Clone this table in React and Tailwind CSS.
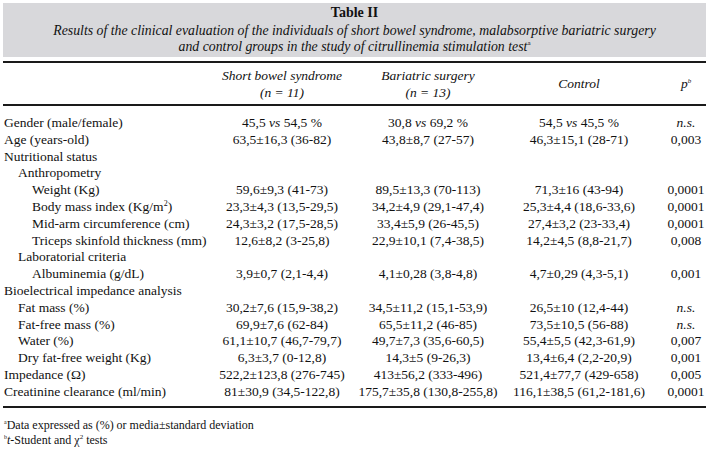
import React from "react";

const rows = [
  { l: "Gender (male/female)", lv: 0, v: [["45,5 ", "vs", " 54,5 %"], ["30,8 ", "vs", " 69,2 %"], ["54,5 ", "vs", " 45,5 %"]], p: "n.s." },
  { l: "Age (years-old)", lv: 0, v: ["63,5±16,3 (36-82)", "43,8±8,7 (27-57)", "46,3±15,1 (28-71)"], p: "0,003" },
  { l: "Nutritional status", lv: 0 },
  { l: "Anthropometry", lv: 1 },
  { l: "Weight (Kg)", lv: 2, v: ["59,6±9,3 (41-73)", "89,5±13,3 (70-113)", "71,3±16 (43-94)"], p: "0,0001" },
  { l: "bmi", lv: 2, v: ["23,3±4,3 (13,5-29,5)", "34,2±4,9 (29,1-47,4)", "25,3±4,4 (18,6-33,6)"], p: "0,0001" },
  { l: "Mid-arm circumference (cm)", lv: 2, v: ["24,3±3,2 (17,5-28,5)", "33,4±5,9 (26-45,5)", "27,4±3,2 (23-33,4)"], p: "0,0001" },
  { l: "Triceps skinfold thickness (mm)", lv: 2, v: ["12,6±8,2 (3-25,8)", "22,9±10,1 (7,4-38,5)", "14,2±4,5 (8,8-21,7)"], p: "0,008" },
  { l: "Laboratorial criteria", lv: 1 },
  { l: "Albuminemia (g/dL)", lv: 2, v: ["3,9±0,7 (2,1-4,4)", "4,1±0,28 (3,8-4,8)", "4,7±0,29 (4,3-5,1)"], p: "0,001" },
  { l: "Bioelectrical impedance analysis", lv: 0 },
  { l: "Fat mass (%)", lv: 1, v: ["30,2±7,6 (15,9-38,2)", "34,5±11,2 (15,1-53,9)", "26,5±10 (12,4-44)"], p: "n.s." },
  { l: "Fat-free mass (%)", lv: 1, v: ["69,9±7,6 (62-84)", "65,5±11,2 (46-85)", "73,5±10,5 (56-88)"], p: "n.s." },
  { l: "Water (%)", lv: 1, v: ["61,1±10,7 (46,7-79,7)", "49,7±7,3 (35,6-60,5)", "55,4±5,5 (42,3-61,9)"], p: "0,007" },
  { l: "Dry fat-free weight (Kg)", lv: 1, v: ["6,3±3,7 (0-12,8)", "14,3±5 (9-26,3)", "13,4±6,4 (2,2-20,9)"], p: "0,001" },
  { l: "Impedance (Ω)", lv: 0, v: ["522,2±123,8 (276-745)", "413±56,2 (333-496)", "521,4±77,7 (429-658)"], p: "0,005" },
  { l: "Creatinine clearance (ml/min)", lv: 0, v: ["81±30,9 (34,5-122,8)", "175,7±35,8 (130,8-255,8)", "116,1±38,5 (61,2-181,6)"], p: "0,0001" },
];

const indent = ["pl-[1px]", "pl-[15px]", "pl-[29px]"];

function Val({ v }) {
  if (Array.isArray(v)) {
    return (
      <span>
        {v[0]}
        <i>{v[1]}</i>
        {v[2]}
      </span>
    );
  }
  return <span>{v}</span>;
}

function Cell({ children }) {
  return <div className="flex justify-center whitespace-nowrap">{children}</div>;
}

export default function App() {
  return (
    <div className="w-[710px] h-[458px] bg-white pl-[3px] pr-[4px] pt-[3px] text-[#111] [font-family:'Liberation_Serif','Times_New_Roman',serif] overflow-hidden">
      <div className="h-[54px] bg-[#d8d8db] pt-[2px] flex flex-col items-center">
        <div className="text-[14px] leading-[16px] font-bold">Table II</div>
        <div className="mt-[2px] text-[13.8px] leading-[16px] italic text-center whitespace-nowrap">
          <div>Results of the clinical evaluation of the individuals of short bowel syndrome, malabsorptive bariatric surgery</div>
          <div>
            and control groups in the study of citrullinemia stimulation test
            <span className="align-super text-[7px] leading-none not-italic">a</span>
          </div>
        </div>
      </div>
      <div className="mt-[4px] h-[2px] bg-[#1a1a1a]" />
      <div className="grid grid-cols-[197px_164px_128px_174px_40px] h-[41px] items-center italic text-[13.5px] leading-[17px]">
        <div />
        <div className="flex flex-col items-center whitespace-nowrap">
          <span>Short bowel syndrome</span>
          <span>(n = 11)</span>
        </div>
        <div className="flex flex-col items-center whitespace-nowrap">
          <span>Bariatric surgery</span>
          <span>(n = 13)</span>
        </div>
        <Cell>Control</Cell>
        <Cell>
          <span>
            p<span className="align-super text-[7px] leading-none">b</span>
          </span>
        </Cell>
      </div>
      <div className="h-[2px] bg-[#1a1a1a]" />
      <div className="pt-[9px] text-[13.5px] leading-[16.8px]">
        {rows.map((r, i) => (
          <div key={i} className="grid grid-cols-[197px_164px_128px_174px_40px] h-[16.8px]">
            <div className={`${indent[r.lv]} whitespace-nowrap`}>
              {r.l === "bmi" ? (
                <span>
                  Body mass index (Kg/m<span className="align-super text-[8px] leading-none">2</span>)
                </span>
              ) : (
                r.l
              )}
            </div>
            {r.v ? (
              <>
                <Cell><Val v={r.v[0]} /></Cell>
                <Cell><Val v={r.v[1]} /></Cell>
                <Cell><Val v={r.v[2]} /></Cell>
                <Cell>{r.p === "n.s." ? <i>n.s.</i> : r.p}</Cell>
              </>
            ) : (
              <>
                <div />
                <div />
                <div />
                <div />
              </>
            )}
          </div>
        ))}
      </div>
      <div className="mt-[5px] h-[2px] bg-[#1a1a1a]" />
      <div className="mt-[10px] pl-[1px] text-[12px] leading-[15px]">
        <div>
          <span className="align-super text-[6px] leading-none">a</span>Data expressed as (%) or media±standard deviation
        </div>
        <div>
          <span className="align-super text-[6px] leading-none">b</span>
          <i>t</i>-Student and χ<span className="align-super text-[7px] leading-none">2</span> tests
        </div>
      </div>
    </div>
  );
}
